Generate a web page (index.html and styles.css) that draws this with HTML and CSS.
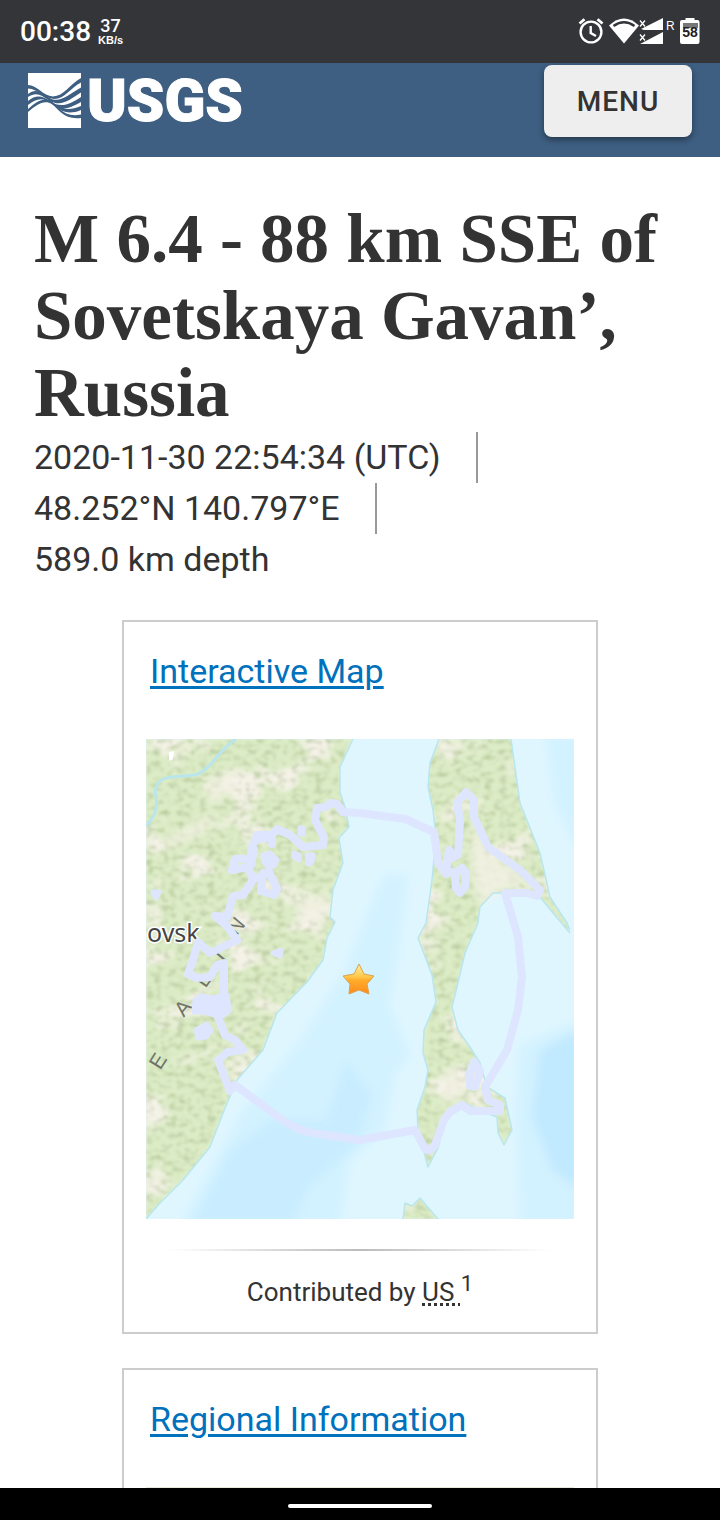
FILE: index.html
```html
<!DOCTYPE html>
<html lang="en">
<head>
<meta charset="utf-8">
<meta name="viewport" content="width=device-width, initial-scale=1">
<title>M 6.4 - 88 km SSE of Sovetskaya Gavan’, Russia</title>
<link rel="stylesheet" href="styles.css">
</head>
<body>
<div class="status">
  <span class="clock">00:38</span>
  <span class="speed"><span class="speed-value">37</span><span class="speed-unit">KB/s</span></span>
  <svg class="status-icons" width="124" height="32" viewBox="576 16 124 32" aria-hidden="true">
    <g fill="none" stroke="#fff" stroke-width="2.4">
      <circle cx="591" cy="32" r="10.4"/>
      <path d="M590.700 26v7l5.300 3"/>
      <path d="M579.500 23.500l5-4.300M602.500 23.500l-5-4.300" stroke-width="2.800"/>
    </g>
    <path d="M609 25.500Q624 11.500 639 25.500L624 43.500Z" fill="#fff"/>
    <path d="M613.500 26Q624 18.500 634.500 26" fill="none" stroke="#343539" stroke-width="2.600"/>
    <path d="M663 18v12h-19l-3-1zM663 32v12h-23z" fill="#fff"/>
    <path d="M640 20.500l5 6m0-6l-5 6M640 34.500l5 6m0-6l-5 6" stroke="#fff" stroke-width="1.300"/>
    <text x="666" y="30" class="roam">R</text>
    <path d="M685.500 20v-2h9v2h3q2 0 2 2v20q0 2-2 2h-15.500q-2 0-2-2V22q0-2 2-2z" fill="#fff"/>
    <path d="M683 23h15v5h-15z" fill="#777"/>
    <text x="690" y="37" class="charge">58</text>
  </svg>
</div>
<div class="page">
  <header class="site-header">
    <a class="logo" href="#" aria-label="USGS home">
      <svg width="53" height="56" viewBox="0 0 53 56" aria-hidden="true">
        <path fill="#fff" d="M0 0H53V55H0Z"/>
        <g fill="#3e5f82">
          <path d="M0 12C9 12 15 23 25 23.500C36 23 41 12 53 5V9.500C42 15 37 26 26 26C15 25 10 16 0 15.500Z"/>
          <path d="M0 21C7 15 14 19 20 24C31 32 41 21 53 14.500V19.500C41 27 34 34 22 28C14 23 9 18 0 24Z"/>
          <path d="M0 28C8 21 15 23 22 28C33 36 42 31 53 24V29C40 36 34 38 24 31C15 24 9 25 0 32Z"/>
          <path d="M0 36C8 29 14 25 21 27C30 33 37 40 53 33V37C39 43 32 37 24 31C16 26 8 32 0 39Z"/>
          <path d="M22 27C31 34 36 45 53 41.500V45C36 47 31 37 22 29Z"/>
        </g>
      </svg>
      <span class="logo-word">USGS</span>
    </a>
    <button class="menu" type="button">MENU</button>
  </header>
  <main class="event">
    <h1 class="title">M 6.4 - 88 km SSE of Sovetskaya Gavan’, Russia</h1>
    <ul class="facts">
      <li>2020-11-30 22:54:34 (UTC)</li>
      <li>48.252°N 140.797°E</li>
      <li>589.0 km depth</li>
    </ul>
    <section class="card">
      <h2 class="card-title"><a href="#">Interactive Map</a></h2>
      <svg class="map" viewBox="146 739 428 480" role="img" aria-label="Map of the epicenter west of Sakhalin">
        <defs>
          <filter id="soft" x="-10%" y="-10%" width="120%" height="120%"><feGaussianBlur stdDeviation="5"/></filter>
          <filter id="terrain" x="0" y="0" width="100%" height="100%" color-interpolation-filters="sRGB">
            <feTurbulence type="fractalNoise" baseFrequency="0.018 0.030" numOctaves="4" seed="8" result="n"/>
            <feColorMatrix in="n" values="0 0 0 0 .96  0 0 0 0 .95  0 0 0 0 .91  5 0 0 0 -2.700" result="pale"/>
            <feTurbulence type="fractalNoise" baseFrequency="0.130 0.180" numOctaves="4" seed="3" result="m"/>
            <feColorMatrix in="m" values="0 0 0 0 .60  0 0 0 0 .68  0 0 0 0 .48  0 1.300 0 0 -.600" result="dark"/>
            <feMerge result="all"><feMergeNode in="SourceGraphic"/><feMergeNode in="pale"/><feMergeNode in="dark"/></feMerge>
            <feGaussianBlur in="all" stdDeviation="0.8" result="smooth"/>
            <feComposite in="smooth" in2="SourceGraphic" operator="in"/>
          </filter>
          <linearGradient id="gold" x1="0" y1="0" x2="0" y2="1"><stop offset="0" stop-color="#fff0a0"/><stop offset=".4" stop-color="#ffcb50"/><stop offset=".55" stop-color="#ffab2a"/><stop offset="1" stop-color="#ff8a1c"/></linearGradient>
        </defs>
        <path fill="#dff6ff" d="M146 739h428v480H146z"/>
        <g filter="url(#soft)">
          <path fill="#d3f2ff" d="M384 875h24l-10 80 -8 50 20 50-15 20-10 55 -35 30-10 65H180l60-110 60-75 45-70 15-40z"/>
          <path fill="#c9edff" d="M345 1060l-20 60-55 0-40 30-38 75h100l15-35 50-45 16-50z"/>
          <path fill="#d3f2ff" d="M545 735h35v120l-25-50zM580 1020l-60 25-5 60 5 120h60z"/>
          <path fill="#c1e9ff" d="M580 1030l-40 20-8 65 20 55 28 20z"/>
        </g>
        <g filter="url(#terrain)" fill="#dcecc6">
          <path d="M146 739H353L340 767V792L345 807 349 827 339 838 343 863 333 890 330 917 335 922 327 938 323 960 307 982 277 1013 263 1050 237 1080 223 1113 210 1147 183 1180 160 1203 146 1219Z"/>
          <path d="M439 739L430 763 428 787 433 810 436 837 432 880 426 923 418 938 432 975 436 1002 424 1030 423 1053 428 1070 425 1087 417 1110 418 1130 428 1167 438 1148 447 1113 462 1102 483 1112 497 1117 498 1133 504 1145 512 1130 505 1098 487 1087 480 1063 470 1047 458 1030 452 1007 457 987 465 953 478 923 480 907 493 893 523 893 540 897 553 913 570 933 567 923 550 897 540 853 520 803 511 739Z"/>
          <path d="M403 1219L405 1203 412 1206 420 1198 438 1219Z"/>
        </g>
        <g fill="#f5f2e7" filter="url(#soft)" opacity=".8">
          <path d="M472 815L486 850 525 878 500 892 480 905 473 880 472 850ZM436 1080l15-15 15 25-12 15-10-3zM295 900l35-8-5 30-25-2zM150 850l50-30 20-5-20 20-40 15zM205 790l30-22 8 8-30 30z"/>
        </g>
        <g fill="none" stroke="#b9e6ec" stroke-width="1.500" stroke-linejoin="round">
          <path d="M353 739L340 767V792L345 807 349 827 339 838 343 863 333 890 330 917 335 922 327 938 323 960 307 982 277 1013 263 1050 237 1080 223 1113 210 1147 183 1180 160 1203 146 1219"/>
          <path d="M439 739L430 763 428 787 433 810 436 837 432 880 426 923 418 938 432 975 436 1002 424 1030 423 1053 428 1070 425 1087 417 1110 418 1130 428 1167 438 1148 447 1113 462 1102 483 1112 497 1117 498 1133 504 1145 512 1130 505 1098 487 1087 480 1063 470 1047 458 1030 452 1007 457 987 465 953 478 923 480 907 493 893 523 893 540 897 553 913 570 933M570 930L567 923 550 897 540 853 520 803 511 739"/>
          <path d="M403 1219L405 1203 412 1206 420 1198 438 1219"/>
          <path d="M236 739C218 750 210 772 194 775C175 778 157 773 155 792C160 808 153 819 146 826" stroke-width="3"/>
        </g>
        <path d="M169 752l5-1-1 8-4 2z" fill="#fff"/>
        <g class="map-range">
          <text x="183" y="1008" transform="rotate(-50 183 1008)" dy="7">A</text>
          <text x="158" y="1061" transform="rotate(-58 158 1061)" dy="7">E</text>
          <text x="203" y="980" transform="rotate(-55 203 980)" dy="7">L</text>
          <text x="220" y="956" transform="rotate(-50 220 956)" dy="7">I</text>
          <text x="236" y="926" transform="rotate(-50 236 926)" dy="7">N</text>
        </g>
        <text x="147" y="942" class="map-city">ovsk</text>
        <g fill="none" stroke="#dee5ff" stroke-width="8" stroke-linejoin="round" stroke-linecap="round">
          <path d="M360 813L343 812 337 804 330 803 326 807 317 808 315 820 320 830 324 837 323 845 303 847 290 835 277 829 272 835 257 835 252 847 250 859 235 859 232 870 248 867 253 880 243 895 233 896 227 917 215 916 227 926 237 940 229 944 210 953 198 942 193 960 188 974 197 978 210 977 217 965 224 963V1000L228 1010 218 1017 225 1035 235 1040 243 1050 228 1052 218 1060 230 1091 235 1085 273 1113 Q290 1127 307 1132L360 1140 415 1130 425 1149 430 1150 435 1145 444 1120 450 1112 462 1105 470 1111H500V1105L488 1100 485 1087 507 1050 518 1010 522 977 518 937 505 893H527L537 896 540 890 520 870 488 847 474 817V800L466 792 457 803 460 820 458 855 452 858 449 850 446 874 438 863 434 832 405 819Z"/>
          <path d="M444 870l11 3 7-5 4 5-1 14-5 6-4-5-1-14"/>
          <path d="M474 1062L469 1075 470 1086 475 1087 480 1071Z"/>
          <path d="M263 873l-2 18 13 4 3-6-8-17M261 879l-8-3"/>
          <path d="M254 850l-3 15M255 840l10-2M272 838v6"/>
        </g>
        <g fill="#dee5ff" stroke="#dee5ff" stroke-width="5" stroke-linejoin="round">
          <path d="M263 855l7-2 7 7-3 6-6 1-4-5zM300 828h3v6h-3zM307 855l6 0-1 7-4 2zM294 853l5 2v5l-5-3zM153 892l6 0-3 6zM273 953l8-3-1 6z"/>
          <path d="M195 1000l6-4 11 2 15-3 2 15-14 5-12-3-9 0zM196 1030l11-6 4 7-5 6-8 1z"/>
        </g>
        <path d="M359 964l5 10 10 2-7 8 2 10-10-4-10 4 1-10-7-8 11-2z" fill="url(#gold)" stroke="#dca24c" stroke-width="1" stroke-linejoin="round"/>
      </svg>
      <hr class="rule">
      <p class="credit">Contributed by <abbr title="National Earthquake Information Center">US&nbsp;</abbr><sup>1</sup></p>
    </section>
    <section class="card">
      <h2 class="card-title"><a href="#">Regional Information</a></h2>
      <div class="region-map"></div>
    </section>
  </main>
</div>
<div class="nav"><span class="pill"></span></div>
</body>
</html>
```
FILE: styles.css
```css
* { box-sizing: border-box; }
body {
  margin: 0;
  height: 100vh;
  display: flex;
  flex-direction: column;
  background: #fff;
  color: #333;
  font-family: Roboto, "Liberation Sans", sans-serif;
}
.status {
  flex: none;
  display: flex;
  align-items: center;
  height: 63px;
  padding: 0 20px;
  background: #343539;
  color: #fff;
}
.clock { font-size: 28px; font-weight: 500; }
.speed {
  display: flex;
  flex-direction: column;
  align-items: center;
  margin-left: 7px;
  font-weight: 700;
}
.speed-value { font-size: 18px; line-height: 16px; font-weight: 500; }
.speed-unit { font: 700 11px/12px "Liberation Sans", sans-serif; }
.status-icons { margin-left: auto; }
.roam { font: 12px "Liberation Sans", sans-serif; fill: #fff; }
.charge { font: 700 14px "Liberation Sans", sans-serif; fill: #222; text-anchor: middle; }
.page { flex: 1; min-height: 0; overflow: hidden; }
.site-header {
  display: flex;
  justify-content: space-between;
  align-items: flex-start;
  height: 94px;
  padding: 2px 28px 0;
  background: #3e5f82;
}
.logo {
  display: flex;
  align-items: center;
  gap: 6px;
  height: 72px;
  color: #fff;
  text-decoration: none;
}
.logo-word {
  font: 900 60px/72px Roboto, "Liberation Sans", sans-serif;
  -webkit-text-stroke: 1px #fff;
}
.menu {
  width: 148px;
  height: 72px;
  border: 0;
  border-radius: 8px;
  background: #eee;
  box-shadow: 0 3px 6px rgba(0, 0, 0, .4);
  color: #333;
  font: 500 28px Roboto, sans-serif;
  letter-spacing: 1px;
}
.event { padding: 44px 34px 0; }
.title {
  margin: 0;
  font: 700 69px/77px "Liberation Serif", serif;
}
.facts {
  margin: 0;
  padding: 0;
  list-style: none;
  font-size: 34px;
  line-height: 51px;
}
.facts li {
  width: fit-content;
  padding-right: 35px;
  border-right: 2px solid #999;
}
.facts li:last-child { border: 0; }
.card {
  max-width: 476px;
  margin: 34px auto 0;
  padding: 22px;
  border: 2px solid #ccc;
}
.facts + .card { margin-top: 35px; }
.card-title {
  margin: 0 4px 40px;
  font-size: 34px;
  line-height: 55px;
  font-weight: 400;
}
.card-title a {
  color: #0071bc;
  text-decoration: underline;
  text-decoration-thickness: 3px;
  text-underline-offset: 3px;
}
.map { display: block; width: 100%; }
.map-range text { font: 21px "Liberation Sans", sans-serif; fill: #70756a; text-anchor: middle; }
.map-city {
  font: 25px "Noto Sans", sans-serif;
  fill: #444;
  stroke: #fff;
  stroke-width: 3px;
  paint-order: stroke;
}
.rule {
  height: 2px;
  margin: 30px 22px 24px;
  border: 0;
  background: linear-gradient(to right, transparent, #bbb, transparent);
}
.credit {
  margin: 0;
  font-size: 26px;
  line-height: 35px;
  text-align: center;
}
.credit abbr {
  text-decoration: underline dotted #333 3px;
  text-underline-offset: 2px;
}
.credit sup { font-size: 22px; line-height: 0; }
.region-map { height: 480px; background: #e4ebda; }
.nav {
  flex: none;
  display: flex;
  justify-content: center;
  align-items: center;
  height: 32px;
  padding-top: 4px;
  background: #000;
}
.pill { width: 144px; height: 4px; border-radius: 2px; background: #fff; }
```
